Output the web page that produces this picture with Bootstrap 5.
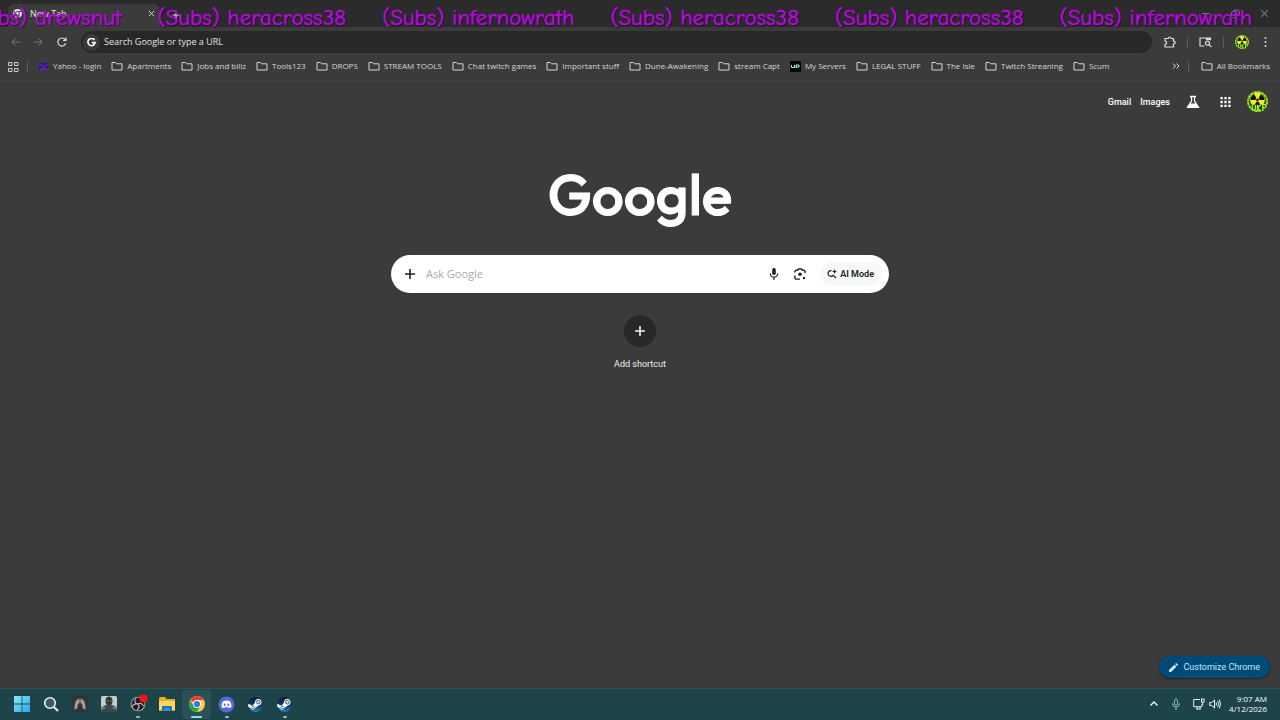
<!DOCTYPE html>
<html lang="en" data-bs-theme="dark">
<head>
<meta charset="utf-8">
<meta name="viewport" content="width=device-width, initial-scale=1">
<title>New Tab</title>
<link href="https://cdn.jsdelivr.net/npm/bootstrap@5.3.0/dist/css/bootstrap.min.css" rel="stylesheet">
<style>
:root{--ui:"Segoe UI","Open Sans","Noto Sans",sans-serif;--panel:#3b3b3b;--dark:#282828;--ink:#d6d6d6}
body{background:#3b3b3b;font-family:var(--ui);font-size:9px;line-height:12px;color:#e8e8e8}
svg{display:block;flex:none}
a{color:inherit;text-decoration:none}
.plain{background:none;border:0;padding:0;color:inherit;line-height:12px;font-size:inherit}
.tabstrip{height:27px;background:#2b2b2b;padding-left:8px}
.tab{width:152px;height:23px;background:var(--panel);border-radius:7px 7px 0 0;padding:0 5px 4px}
.winctl{color:#777;gap:20px;padding-right:11px}
.newtab{margin:0 0 8px 12px}
.toolbar{height:30px;background:var(--panel);padding:0 10px}
.omnibox{height:22px;border-radius:11px;background:var(--dark);padding-left:2px;margin:0 12px 0 13px}
.tools{gap:11px}
.gbadge{width:17px;height:17px;border-radius:50%;background:#3b3b3b}
.field{background:none;border:0;outline:0;padding:0;color:#e3e3e3;min-width:0}
.omnibox .field{font-size:9px}
.omnibox .field::placeholder{color:#e3e3e3;opacity:1}
.sep{width:1px;height:11px;background:#5d5d5d}
.marks{height:24px;background:var(--panel);border-bottom:1px solid #424242;padding:0 10px 5px 8px;font-size:8px;color:var(--ink);white-space:nowrap}
.marks ul{gap:10px;margin-left:10px}
.marks li a{gap:4px}
.ticker{top:5px;left:-35px;gap:36px;white-space:nowrap;font:23px/26px "Comic Sans MS","Comic Neue","DejaVu Sans",sans-serif;color:#b00fd4;text-shadow:0 0 1px #b00fd4,1px 1px 1px #300040}
.tickerbox{height:32px;overflow:hidden;pointer-events:none}
.corner{padding:10px 12px 0 0;font:500 9px/12px Roboto,sans-serif;color:#fff}
.corner a+a{margin-left:9px}
.wordmark{font:500 57px/66px "Product Sans","Google Sans",Outfit,Urbanist,"League Spartan",Poppins,Montserrat,Quicksand,Nunito,Roboto,sans-serif;-webkit-text-stroke:1px #fff;color:#fff;margin:49px 0 0}
.searchbox{width:498px;max-width:94%;height:38px;border-radius:19px;background:#fff;color:#202124;padding:0 7px 0 13px;margin-top:28px}
.searchbox .field{font-size:11px;line-height:16px;color:#333;margin-left:10px}
.searchbox .field::placeholder{color:#aaa;opacity:1}
.actions{gap:14px}
.aimode{height:24px;border-radius:12px;background:#f7f8f9;padding:0 8px 0 7px;gap:3px;color:#202124;font:600 9px/12px Roboto,sans-serif;white-space:nowrap}
.shortcut{margin-top:22px;gap:11px;font:9px/12px Roboto,sans-serif;color:#eee}
.plusdisc{width:32px;height:32px;border-radius:50%;background:#282828}
.customize{height:22px;border-radius:11px;background:#004a77;color:#c2e7ff;font:9px/12px Roboto,sans-serif;padding:0 10px;gap:5px;margin:0 10px 10px 0;box-shadow:0 1px 2px #222}
.taskbar{height:32px;background:#1c4449;border-top:1px solid #295257;padding:0 13px 1px 7px;color:#fff}
.app{width:29px;height:29px;padding:0;border:0;border-radius:4px;background:none;position:relative}
.app.current{background:#2b5157;margin:0 1px}
.app.running::after{content:"";position:absolute;bottom:1px;left:13px;width:4px;height:2px;border-radius:1px;background:#9fb7bb}
.app.current::after{left:9px;width:11px;background:#8be0ec}
.clock{font-size:8px;line-height:10px;text-align:right}
</style>
</head>
<body class="d-flex flex-column vh-100 overflow-hidden position-relative">
<svg width="0" height="0" class="position-absolute" aria-hidden="true">
 <symbol id="folder" viewBox="0 0 12 12"><path d="M1 2.500h3.400l1.200 1.300H11v6.200H1z" fill="none" stroke="currentColor" stroke-width="1" stroke-linejoin="round"/></symbol>
 <symbol id="plus" viewBox="0 0 12 12"><path d="M6 1v10M1 6h10" stroke="currentColor" stroke-width="1.600"/></symbol>
 <symbol id="close" viewBox="0 0 8 8"><path d="M1 1l6 6M7 1L1 7" stroke="currentColor" stroke-width="1"/></symbol>
 <symbol id="nuke" viewBox="0 0 20 20"><circle cx="10" cy="10" r="9" fill="#263a0a" stroke="#8be327" stroke-width="2" stroke-dasharray="3 .5"/><circle cx="10" cy="8.500" r="7" fill="#f3ee20"/><path d="M10 8.500L6.600 2.700a6.500 6.500 0 0 1 6.800 0zM10 8.500h6.500a6.500 6.500 0 0 1-3.200 5.700zM10 8.500H3.500a6.500 6.500 0 0 0 3.200 5.700z" fill="#111" transform="rotate(180 10 8.500)"/><circle cx="10" cy="8.500" r="1.600" fill="#111" stroke="#f3ee20" stroke-width=".7"/><path d="M4 13h13v5H5z" fill="#263a0a"/><path d="M5 13v4q1.500 2 3 0v-4M10 19v-6M13 13l-3 3 3 3M15 19v-6h3M15 16h2" fill="none" stroke="#9df52a" stroke-width="1.300"/></symbol>
 <symbol id="steam" viewBox="0 0 18 18"><defs><linearGradient id="sg" x2="0" y2="1"><stop stop-color="#101b3c"/><stop offset=".6" stop-color="#123c6b"/><stop offset="1" stop-color="#1689be"/></linearGradient></defs><circle cx="9" cy="9" r="8" fill="url(#sg)"/><path d="M1.200 8.200L6 10.200 9.500 5.500 13 9.500 8.800 12.600A2.500 2.500 0 0 1 4.200 13.300L1.400 11.500z" fill="#fff"/><circle cx="12" cy="6.500" r="3" fill="#dfe7f0" stroke="#fff" stroke-width="1"/><circle cx="12" cy="6.500" r="1.900" fill="#dfe7f0" stroke="#18325d" stroke-width=".8"/><circle cx="6.500" cy="12.300" r="1.500" fill="none" stroke="#24517c" stroke-width=".8"/></symbol>
</svg>

<header>
 <div class="tabstrip d-flex align-items-end">
  <div class="tab d-flex align-items-center">
   <svg width="9" height="9" viewBox="0 0 16 16"><circle cx="8" cy="8" r="8" fill="#ddd"/><path d="M8 4.500h7M5 9.500L1.500 4M11 9.500L7.500 15.500" stroke="#3b3b3b" stroke-width="2"/><circle cx="8" cy="8" r="3.500" fill="#ddd" stroke="#3b3b3b" stroke-width="1.500"/></svg>
   <span class="ms-2">New Tab</span>
   <button class="plain ms-auto" aria-label="Close tab"><svg width="7" height="7"><use href="#close"/></svg></button>
  </div>
  <button class="plain newtab" aria-label="New tab"><svg width="8" height="8"><use href="#plus"/></svg></button>
  <div class="winctl d-flex align-items-center ms-auto h-100">
   <button class="plain" aria-label="Minimize"><svg width="9" height="9"><path d="M0 4.500h8" stroke="currentColor"/></svg></button>
   <button class="plain" aria-label="Restore"><svg width="9" height="9" fill="none" stroke="currentColor"><rect x=".5" y="2.500" width="6" height="6" rx="1"/><path d="M2.500 1h4q2 0 2 2v4"/></svg></button>
   <button class="plain" aria-label="Close window"><svg width="9" height="9"><use href="#close"/></svg></button>
  </div>
 </div>
 <div class="toolbar d-flex align-items-center">
  <button class="plain" aria-label="Back"><svg width="11" height="12" viewBox="0 0 11 12" fill="none" stroke="#777"><path d="M10 6H2M5.500 2.500L2 6l3.500 3.500"/></svg></button>
  <button class="plain ms-2 ps-1" aria-label="Forward"><svg width="11" height="12" viewBox="0 0 11 12" fill="none" stroke="#777"><path d="M1 6h8M5.500 2.500L9 6 5.500 9.500"/></svg></button>
  <button class="plain ms-2 ps-1" aria-label="Reload"><svg width="12" height="12" viewBox="0 0 12 12" fill="none" stroke="#ddd" stroke-width="1.200"><path d="M9.700 7.200A4 4 0 1 1 9 3.500L10 4.500M10 1.500v3H7"/></svg></button>
  <div class="omnibox d-flex align-items-center flex-grow-1">
   <span class="gbadge d-flex align-items-center justify-content-center"><svg width="9" height="9" viewBox="0 0 10 10"><path d="M8.300 2.200A4 4 0 1 0 9 5.200H5.200" fill="none" stroke="#fff" stroke-width="1.800"/></svg></span>
   <input class="field flex-grow-1 ms-1" type="text" aria-label="Address bar" placeholder="Search Google or type a URL">
  </div>
  <div class="tools d-flex align-items-center">
   <button class="plain" aria-label="Extensions"><svg width="12" height="12" viewBox="0 0 12 12" fill="none" stroke="#ddd" stroke-width="1.200"><path d="M1 2.500h3.300q.2-1.500 1.400-1.500t1.400 1.500h2.400v2.600q1.800.1 1.800 1.400T9.500 8v3H1V8.300Q2.700 8 2.700 6.700T1 5.200z"/></svg></button>
   <span class="sep"></span>
   <button class="plain" aria-label="Search tabs"><svg width="13" height="12" viewBox="0 0 13 12" fill="none" stroke="#ddd" stroke-width="1.200"><path d="M5.500 10H1V2h10.500v2.300"/><path d="M7 3h4" stroke-width="2"/><circle cx="8.500" cy="7.200" r="2"/><path d="M10 8.700l2.500 2.500"/></svg></button>
   <span class="sep"></span>
   <button class="plain" aria-label="Profile"><svg width="14" height="14"><use href="#nuke"/></svg></button>
   <button class="plain" aria-label="Menu"><svg width="10" height="12" fill="#ddd"><circle cx="5.500" cy="2" r="1"/><circle cx="5.500" cy="6" r="1"/><circle cx="5.500" cy="10" r="1"/></svg></button>
  </div>
 </div>
 <nav class="marks d-flex align-items-center" aria-label="Bookmarks">
  <button class="plain" aria-label="Tab groups"><svg width="11" height="11" fill="none" stroke="#ccc"><path d="M.5 1.500h3.500v3H.5zM6.500 1.500H10v3H6.500zM.5 7.500h3.500v3H.5zM6.500 7.500H10v3H6.500z"/></svg></button>
  <span class="sep ms-2"></span>
  <ul class="list-unstyled d-flex mb-0 flex-grow-1 overflow-hidden">
   <li><a href="#" class="d-flex align-items-center"><svg width="11" height="11"><path d="M1 2h9v7H1z" fill="#32147c"/><path d="M1.500 3L5.500 6 9.500 3M1.500 8h8" fill="none" stroke="#6b3be0"/></svg>Yahoo - login</a></li>
   <li><a href="#" class="d-flex align-items-center"><svg width="12" height="12"><use href="#folder"/></svg>Apartments</a></li>
   <li><a href="#" class="d-flex align-items-center"><svg width="12" height="12"><use href="#folder"/></svg>Jobs and billz</a></li>
   <li><a href="#" class="d-flex align-items-center"><svg width="12" height="12"><use href="#folder"/></svg>Tools123</a></li>
   <li><a href="#" class="d-flex align-items-center"><svg width="12" height="12"><use href="#folder"/></svg>DROPS</a></li>
   <li><a href="#" class="d-flex align-items-center"><svg width="12" height="12"><use href="#folder"/></svg>STREAM TOOLS</a></li>
   <li><a href="#" class="d-flex align-items-center"><svg width="12" height="12"><use href="#folder"/></svg>Chat twitch games</a></li>
   <li><a href="#" class="d-flex align-items-center"><svg width="12" height="12"><use href="#folder"/></svg>Important stuff</a></li>
   <li><a href="#" class="d-flex align-items-center"><svg width="12" height="12"><use href="#folder"/></svg>Dune-Awakening</a></li>
   <li><a href="#" class="d-flex align-items-center"><svg width="12" height="12"><use href="#folder"/></svg>stream Capt</a></li>
   <li><a href="#" class="d-flex align-items-center"><svg width="11" height="11"><path d="M0 0h11v11H0z" fill="#050808"/><path d="M1.500 4v2.500h3V4M6 7V4h3v2H6" fill="none" stroke="#b7e8e4"/></svg>My Servers</a></li>
   <li><a href="#" class="d-flex align-items-center"><svg width="12" height="12"><use href="#folder"/></svg>LEGAL STUFF</a></li>
   <li><a href="#" class="d-flex align-items-center"><svg width="12" height="12"><use href="#folder"/></svg>The Isle</a></li>
   <li><a href="#" class="d-flex align-items-center"><svg width="12" height="12"><use href="#folder"/></svg>Twitch Streaning</a></li>
   <li><a href="#" class="d-flex align-items-center"><svg width="12" height="12"><use href="#folder"/></svg>Scum</a></li>
  </ul>
  <button class="plain" aria-label="More bookmarks"><svg width="8" height="8" fill="none" stroke="#ddd"><path d="M1 1.500l2.500 2.500L1 6.500M4.500 1.500L7 4 4.500 6.500"/></svg></button>
  <span class="sep mx-2"></span>
  <a href="#" class="d-flex align-items-center ms-1 gap-1"><svg width="12" height="12"><use href="#folder"/></svg>All Bookmarks</a>
 </nav>
</header>

<main class="flex-grow-1 d-flex flex-column align-items-center">
 <div class="corner d-flex align-items-center justify-content-end w-100">
  <a href="#">Gmail</a><a href="#">Images</a>
  <button class="plain ms-3" aria-label="Search labs"><svg width="14" height="14" viewBox="0 0 14 14" fill="none" stroke="#fff" stroke-width="1.300"><path d="M4 1.500h6M5.500 1.500V6L1.500 12.300h11L8.500 6V1.500"/><path d="M4 8.500h6l2.500 4h-11z" fill="#fff" stroke="none"/></svg></button>
  <button class="plain ms-3 ps-1" aria-label="Google apps"><svg width="11" height="12" viewBox="0 0 12 12" fill="#fff"><path d="M.5.500H3V3H.5zM4.750.500h2.500V3h-2.500zM9 .5h2.500V3H9zM.5 4.750H3v2.500H.5zM4.750 4.750h2.500v2.500h-2.500zM9 4.750h2.500v2.500H9zM.5 9H3v2.500H.5zM4.750 9h2.500v2.500h-2.500zM9 9h2.500v2.500H9z"/></svg></button>
  <button class="plain ms-3" aria-label="Account"><svg width="21" height="21"><use href="#nuke"/></svg></button>
 </div>
 <h1 class="wordmark">Google</h1>
 <form class="searchbox d-flex align-items-center">
  <button type="button" class="plain" aria-label="Add files"><svg width="12" height="12"><use href="#plus"/></svg></button>
  <input class="field flex-grow-1" type="text" aria-label="Ask Google" placeholder="Ask Google">
  <div class="actions d-flex align-items-center">
   <button type="button" class="plain" aria-label="Voice search"><svg width="12" height="14" viewBox="0 0 12 14"><rect x="4.200" y="1" width="3.600" height="7" rx="1.800" fill="#202124"/><path d="M2.300 6.500a3.700 3.700 0 0 0 7.400 0M6 10v3" fill="none" stroke="#202124" stroke-width="1.200"/></svg></button>
   <button type="button" class="plain" aria-label="Image search"><svg width="12" height="12" viewBox="0 0 12 12" fill="none" stroke="#202124" stroke-width="1.400"><path d="M.9 4.500V3.800Q.9 2.300 2.400 2.300H3.500L4.300 1h3.400l.8 1.300h1.100q1.500 0 1.500 1.500V5M.9 7.500v1.700q0 1.900 1.900 1.900H6"/><circle cx="6" cy="6.300" r="1.800" fill="#202124" stroke="none"/><circle cx="10" cy="10" r="1.200" fill="#202124" stroke="none"/></svg></button>
   <button type="button" class="aimode border-0 d-flex align-items-center"><svg width="10" height="10" viewBox="0 0 10 10" fill="none" stroke="#202124" stroke-width="1.200"><path d="M4.500 1.600A2.900 2.900 0 1 0 6.300 6.200M5.800 5.800L9 9"/><path d="M7.500 0l.7 1.800L10 2.500l-1.800.7L7.500 5l-.7-1.800L5 2.500l1.800-.7z" fill="#202124" stroke="none"/></svg>AI Mode</button>
  </div>
 </form>
 <a href="#" class="shortcut d-flex flex-column align-items-center"><span class="plusdisc d-flex align-items-center justify-content-center"><svg width="12" height="12"><use href="#plus"/></svg></span>Add shortcut</a>
 <button class="customize border-0 d-flex align-items-center mt-auto ms-auto"><svg width="9" height="9" viewBox="0 0 9 9" fill="#d3edff"><path d="M0 9V7L5.300 1.700l2 2L2 9zM6 1l.8-.8q.3-.3.600 0l1.400 1.400q.3.300 0 .6L8 3z"/></svg>Customize Chrome</button>
</main>

<footer class="taskbar d-flex align-items-center">
 <button class="app d-flex align-items-center justify-content-center" aria-label="Start"><svg width="16" height="16"><defs><linearGradient id="wg" x2="1" y2="1"><stop stop-color="#8be9ff"/><stop offset="1" stop-color="#2ba5ea"/></linearGradient></defs><path d="M0 0h7.600v7.600H0zM8.400 0H16v7.600H8.400zM0 8.400h7.600V16H0zM8.400 8.400H16V16H8.400z" fill="url(#wg)"/></svg></button>
 <button class="app d-flex align-items-center justify-content-center" aria-label="Search"><svg width="16" height="16" fill="#3d5d62" stroke="#eee" stroke-width="1.600"><circle cx="7" cy="7" r="5.300"/><path d="M11 11l4 4" stroke-width="2"/></svg></button>
 <button class="app d-flex align-items-center justify-content-center" aria-label="Game"><svg width="16" height="16"><rect width="16" height="16" rx="1.500" fill="#33313a"/><path d="M7 2.500Q3 4 2.500 10v4l3-2V9L7.200 7zM9 2.500q4 1.500 4.500 7.500v4l-3-2V9L8.800 7z" fill="#a39c98"/><path d="M7 3h2v4H7z" fill="#756c6b"/></svg></button>
 <button class="app d-flex align-items-center justify-content-center" aria-label="Portrait"><svg width="16" height="16"><rect width="16" height="16" rx="1.500" fill="#c4cccc"/><path d="M0 11q8-5 16 0v5H0z" fill="#77817f"/><path d="M0 14q8-4 16 0v2H0z" fill="#3c4749"/><ellipse cx="8" cy="5" rx="3.500" ry="4.500" fill="#303738"/><path d="M3 10q5-3 10 0l-2 3H5z" fill="#414a4b"/><path d="M6 5h1.500M9 5h1.500" stroke="#829091"/></svg></button>
 <button class="app running d-flex align-items-center justify-content-center" aria-label="OBS Studio"><svg width="20" height="20" class="overflow-visible"><circle cx="10" cy="10" r="7.300" fill="#bdb9be"/><circle cx="10" cy="10" r="6.500" fill="#211e25"/><path d="M8 4.500q-3 4 1.500 5.500 4-2 6 2M9.500 10q-5-.5-5 3M10 10q2.500 3-1 6" fill="none" stroke="#bbb4b9" stroke-width="1.200"/><circle cx="15.500" cy="4.500" r="4" fill="#f01318"/></svg></button>
 <button class="app d-flex align-items-center justify-content-center" aria-label="File Explorer"><svg width="18" height="16"><path d="M1 2.500q0-1.500 1.500-1.500H7l1.500 2H16q1 0 1 1v10.500H1z" fill="#e5ad2a"/><path d="M1 5h16v9.500H1z" fill="#ffd45f"/><path d="M4 15v-4q0-1 1-1h8q1 0 1 1v4z" fill="#1c73b8"/><path d="M6 12h6v3H6z" fill="#2d93d1"/></svg></button>
 <button class="app current running d-flex align-items-center justify-content-center" aria-label="Chrome"><svg width="18" height="18" viewBox="0 0 18 18"><circle cx="9" cy="9" r="8" fill="#ffcf3e"/><path d="M9 9L2.100 5A8 8 0 0 1 15.900 5H9z" fill="#e54135"/><path d="M2.100 5A8 8 0 0 0 8.800 17L12.500 11 9 9H4.500z" fill="#2aa24b"/><circle cx="9" cy="9" r="4" fill="#fff"/><circle cx="9" cy="9" r="3.100" fill="#3578e5"/></svg></button>
 <button class="app running d-flex align-items-center justify-content-center" aria-label="Discord"><svg width="17" height="17" viewBox="0 0 17 17"><circle cx="8.500" cy="8.500" r="8" fill="#5865df"/><path d="M5 5.300q3.500-1.500 7 0Q13.700 8 13.500 11q-1.200 1-2.600 1.200l-.6-1H6.700l-.6 1Q4.700 12 3.500 11 3.300 8 5 5.300z" fill="#fff"/><ellipse cx="6.700" cy="8.700" rx="1" ry="1.200" fill="#5865df"/><ellipse cx="10.300" cy="8.700" rx="1" ry="1.200" fill="#5865df"/></svg></button>
 <button class="app d-flex align-items-center justify-content-center" aria-label="Steam"><svg width="17" height="17"><use href="#steam"/></svg></button>
 <button class="app running d-flex align-items-center justify-content-center" aria-label="Steam library"><svg width="17" height="17"><use href="#steam"/></svg></button>
 <button class="plain ms-auto" aria-label="Hidden icons"><svg width="10" height="10" fill="none" stroke="#fff" stroke-width="1.300"><path d="M1.500 6.500L5 3l3.500 3.500"/></svg></button>
 <button class="plain ms-2 ps-1" aria-label="Microphone"><svg width="10" height="12" fill="none" stroke="#82c7bb"><rect x="3.500" y="1" width="3" height="6" rx="1.500"/><path d="M1.500 5.500q0 3.500 3.500 3.500t3.500-3.500M5 9v3"/></svg></button>
 <button class="plain ms-2 ps-1" aria-label="Network"><svg width="12" height="12" fill="none" stroke="#eee"><path d="M7 1.500H.7v7.200H9V6M3 11h5M4 9v2M7 9v2"/><rect x="8.500" y="1" width="2.500" height="3"/><path d="M9.700 4v3"/></svg></button>
 <button class="plain ms-1" aria-label="Volume"><svg width="12" height="12" fill="none" stroke="#eee"><path d="M.7 4.500h2L5.500 2v8L2.700 7.500h-2zM7 4.500q1.200 1.500 0 3M8.700 3q2.300 3 0 6M10.300 1.700q2.500 4.300 0 8.600"/></svg></button>
 <div class="clock ms-2"><time datetime="2026-04-12T09:07">9:07 AM<br>4/12/2026</time></div>
</footer>

<div class="tickerbox position-absolute top-0 start-0 w-100">
 <div class="ticker d-flex position-absolute"><span>(Subs) drewsnut</span><span>(Subs) heracross38</span><span>(Subs) infernowrath</span><span>(Subs) heracross38</span><span>(Subs) heracross38</span><span>(Subs) infernowrath</span></div>
</div>
<script src="https://cdn.jsdelivr.net/npm/bootstrap@5.3.0/dist/js/bootstrap.bundle.min.js"></script>
</body>
</html>
